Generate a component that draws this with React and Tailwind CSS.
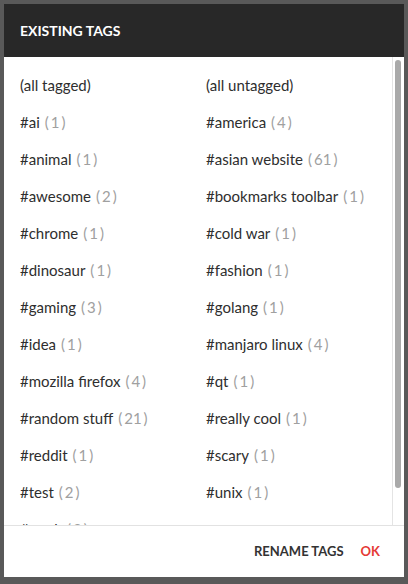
const LEFT = [
    { name: '(all tagged)' },
    { name: '#ai', count: 1 },
    { name: '#animal', count: 1 },
    { name: '#awesome', count: 2 },
    { name: '#chrome', count: 1 },
    { name: '#dinosaur', count: 1 },
    { name: '#gaming', count: 3 },
    { name: '#idea', count: 1 },
    { name: '#mozilla firefox', count: 4 },
    { name: '#random stuff', count: 21 },
    { name: '#reddit', count: 1 },
    { name: '#test', count: 2 },
    { name: '#work', count: 3 },
];

const RIGHT = [
    { name: '(all untagged)' },
    { name: '#america', count: 4 },
    { name: '#asian website', count: 61 },
    { name: '#bookmarks toolbar', count: 1 },
    { name: '#cold war', count: 1 },
    { name: '#fashion', count: 1 },
    { name: '#golang', count: 1 },
    { name: '#manjaro linux', count: 4 },
    { name: '#qt', count: 1 },
    { name: '#really cool', count: 1 },
    { name: '#scary', count: 1 },
    { name: '#unix', count: 1 },
];

function TagRow({ tag }) {
    return (
        <div className="h-[37px] flex items-center whitespace-nowrap">
            <span className="text-[#2e2e2e]">{tag.name}</span>
            {tag.count != null && (
                <span className="ml-[5px] text-[#a0a0a0]">
                    (<span className="mx-[2px]">{tag.count}</span>)
                </span>
            )}
        </div>
    );
}

export default function App() {
    return (
        <div
            className="w-[408px] h-[584px] bg-[#595959] pt-[4px] px-[4px] pb-[7px]"
            style={{ fontFamily: 'Lato, "Open Sans", sans-serif' }}
        >
            <div className="h-full bg-white flex flex-col">
                <div className="shrink-0 h-[53px] bg-[#282828] px-4 flex items-center">
                    <h2 className="text-white font-bold text-[14px] uppercase">Existing Tags</h2>
                </div>

                <div className="flex-1 min-h-0 flex">
                    <div className="flex-1 min-h-0 overflow-hidden pl-4 pt-[10px] grid grid-cols-[186px_1fr] content-start text-[15px]">
                        <div className="flex flex-col">
                            {LEFT.map((t) => <TagRow key={t.name} tag={t} />)}
                        </div>
                        <div className="flex flex-col">
                            {RIGHT.map((t) => <TagRow key={t.name} tag={t} />)}
                        </div>
                    </div>
                    <div className="shrink-0 w-[12px] border-l border-[#e4e4e4] pl-[2px] pr-[3px] pt-[3px] pb-[37px]">
                        <div className="h-full rounded-[3px] bg-[#a9a9a9]" />
                    </div>
                </div>

                <div className="shrink-0 h-[52px] border-t border-[#e2e2e2] flex items-center justify-end gap-[17px] pr-[24px] text-[13px] font-bold">
                    <button className="uppercase text-[#333333]">Rename Tags</button>
                    <button className="uppercase text-[#e53935]">OK</button>
                </div>
            </div>
        </div>
    );
}
